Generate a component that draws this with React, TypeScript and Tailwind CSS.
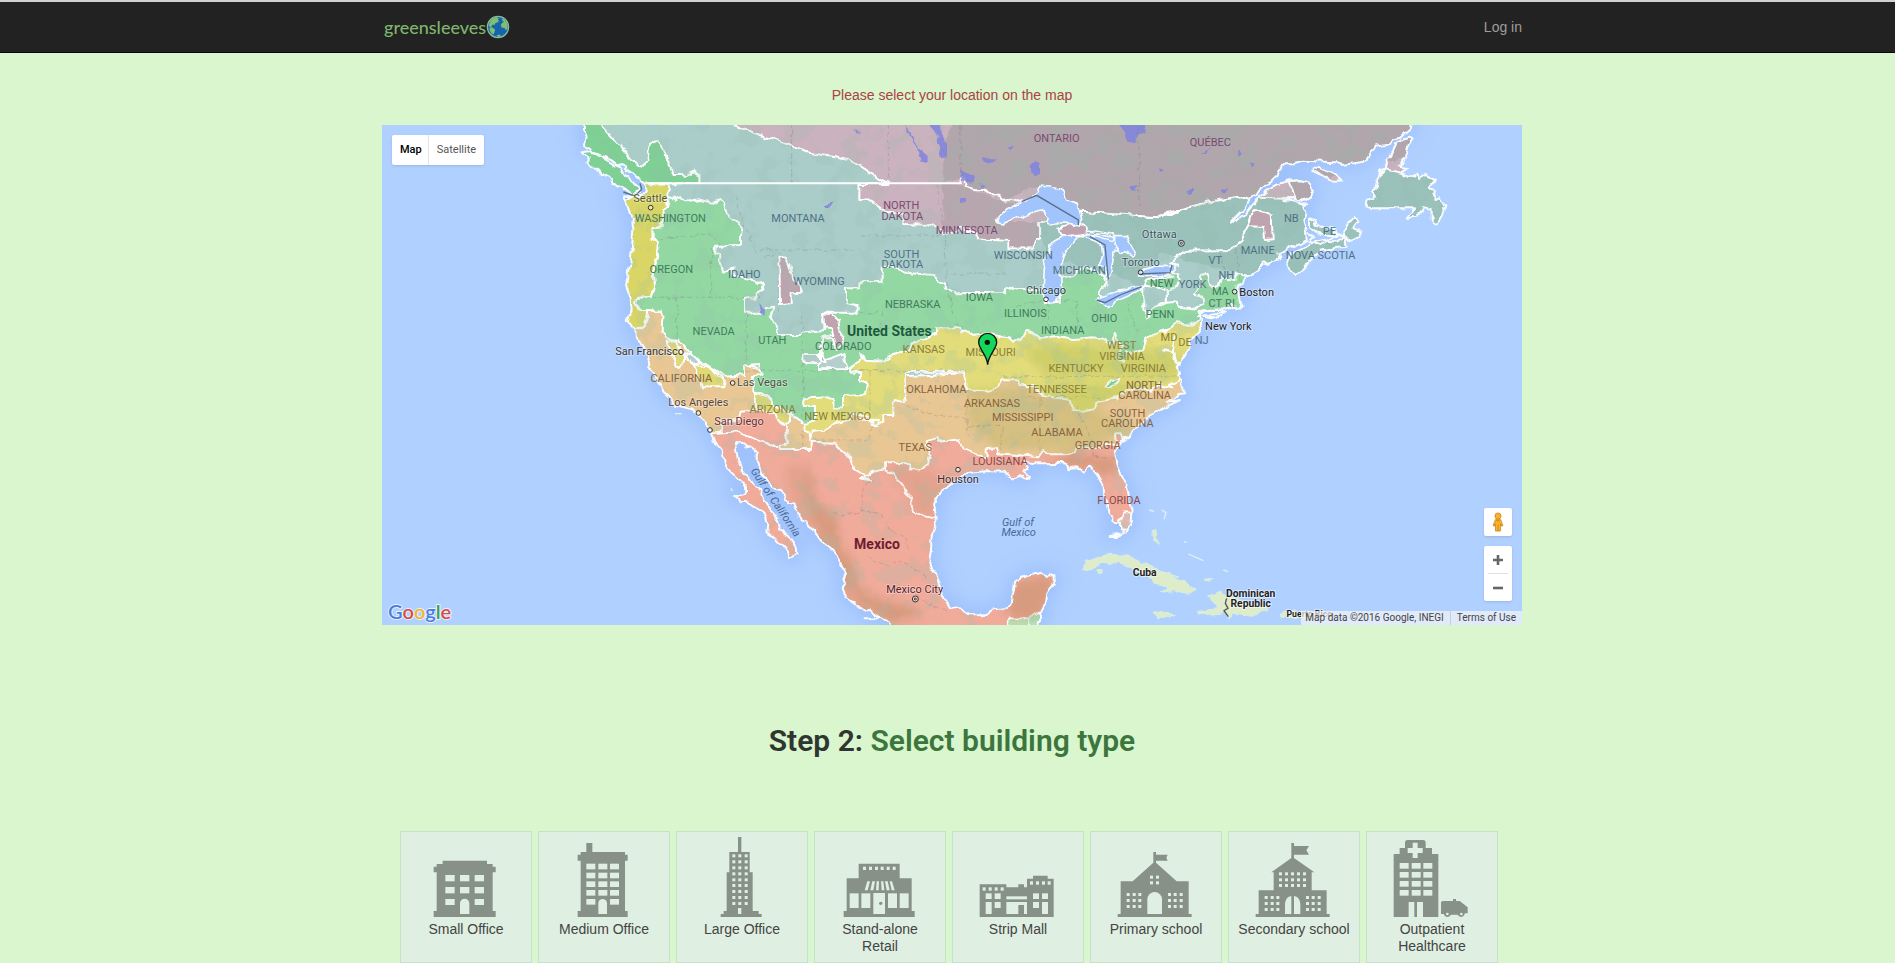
import type { ReactNode } from "react";

type Sheet = "nw" | "nc" | "ne" | "sw" | "s" | "se";
type Piece = [Sheet, string];

// The chart is drawn on six sheets; each sheet has its own origin.
const origins: Record<Sheet, [number, number]> = {
  nw: [534, -15],
  nc: [1434, -15],
  ne: [2334, -15],
  sw: [534, 735],
  s: [1434, 735],
  se: [2334, 735],
};

function pts(...pieces: Piece[]): string {
  return pieces
    .map(([sheet, list]) => {
      const [ox, oy] = origins[sheet];
      return list
        .trim()
        .split(/\s+/)
        .map((p) => {
          const [x, y] = p.split(",").map(Number);
          return `${x + ox},${y + oy}`;
        })
        .join(" ");
    })
    .join(" ");
}

const mainland = pts(
  ["nw", "72,-20 72,30 80,50 75,75 88,85 95,98 130,108 150,118 175,135 188,132 195,150 220,160 238,172 252,190 262,205 258,222 240,226 225,232 192,226 198,245 205,260 210,285 217,300 220,330 217,370 212,420 205,470 200,500 207,520 212,535 215,570 203,605 225,625 228,655 245,672 262,700 268,735 290,768"],
  ["sw", "290,28 305,60 325,78 345,105 385,115 415,130 430,150 450,178 460,200 470,225 487,245 495,285 520,310 545,335 555,350 555,368 540,378 520,376 545,400 560,398 580,410 610,425 622,440 625,460 622,490 640,500 660,520 680,540 688,562 700,560 712,550 710,530 698,512 685,510 670,490 660,475 655,455 640,430 625,415 610,390 600,360 580,340 570,325 545,300 535,270 530,250 525,218 545,222 560,235 575,232 590,245 590,265 600,290 610,320 620,330 635,355 660,360 675,375 685,395 700,400 715,425 722,448 738,455 745,470 760,480 765,492 800,525 825,550 840,575 848,600 858,610 850,628 855,640 845,655 855,680 880,698 905,715 940,728 960,740"],
  ["s", "20,745 60,742 85,755 100,790 530,790 540,760 540,730 555,700 560,670 570,650 585,640 583,615 565,617 545,608 500,618 465,635 460,670 455,700 435,715 400,718 375,733 325,733 300,715 270,708 250,680 235,650 225,610 215,590 208,570 213,540 215,500 222,470 230,450 222,400 228,385 240,370 270,345 300,320 330,308 380,303 430,305 445,320 460,325 475,318 490,320 500,330 510,320 490,303 505,290 495,275 530,280 560,280 600,278 630,295 650,292 665,302 690,290 715,320 727,345 730,380 740,400 745,425 760,440 760,455 780,458 780,478 790,480 785,490 755,495 765,500 795,488 812,460 815,410 800,350 785,320 775,290 765,250 775,230 790,210 820,180 850,160 870,135 890,128 915,112 960,90"],
  ["se", "20,95 40,85 55,72 72,70 70,50 55,20 58,5"],
  ["ne", "60,765 50,740 75,710 85,690 88,665 105,650 120,630 125,600 110,590 140,570 180,568 215,558 235,565 245,555 240,548 235,520 232,505 240,490 260,470 300,445 312,430 330,435 340,420 358,415 355,400 370,392 400,378 420,372 440,360 438,335 430,300 437,280 430,262 445,250 425,255 405,245 370,240 400,235 425,245 450,230 460,205 440,185 420,180 390,182 360,190 330,205 300,225 285,250 270,265 250,290 215,305 235,285 255,265 270,235 290,225 305,200 330,188 350,170 360,150 375,130 400,130 430,122 490,125 530,127 545,135 580,130 610,125 630,98 650,80 690,72 700,55 720,50 750,25 755,-20"],
);

const islands = [
  pts(["nw", "65,98 90,92 100,105 130,108 150,130 178,142 190,165 220,185 240,218 225,225 205,215 185,203 160,190 150,175 128,165 115,150 98,148 85,130 90,115"]),
  pts(["ne", "620,262 622,240 645,230 635,215 650,205 655,180 665,150 685,145 682,120 700,95 710,65 745,50 758,58 745,75 735,110 718,140 745,145 725,158 745,168 765,160 775,178 795,165 825,180 805,205 825,210 820,240 840,235 855,260 845,290 832,312 815,300 815,270 790,265 770,290 740,295 768,265 720,265 640,265"]),
  pts(["ne", "385,425 400,400 430,385 460,368 490,360 530,365 555,350 560,380 520,385 480,392 455,420 430,450 408,462 390,450"]),
  pts(["ne", "550,345 565,310 585,290 592,305 580,325 605,335 600,350 575,362 558,358"]),
  pts(["ne", "450,295 465,300 470,318 520,325 530,345 480,345 450,320"]),
  pts(["ne", "455,142 480,145 530,165 545,185 520,185 485,165 455,152"]),
  pts(["ne", "128,588 165,582 197,572 185,585 150,595"]),
];

const red = pts(["sw", "300,200 400,188 540,60 800,90"], ["s", "0,150 900,150 1000,300 1000,800 -800,800"]);
const orange = pts(
  ["nw", "180,628 248,628 262,600 265,572 308,572 310,640 450,690"],
  ["sw", "560,-20 700,40 850,60"],
  ["s", "100,20 500,0 800,20 960,30"],
  ["se", "120,20 120,130"],
  ["s", "820,260 820,180 790,205 785,190 765,190 768,225 735,222 720,235 650,232 645,250 560,250 550,240 535,262 500,258 415,250 410,235 380,238 380,260 355,255 310,235 300,208 240,215 235,203 205,212 200,225 215,240 205,265 200,285 180,302 150,295 145,280 75,280 75,298 40,305 0,325"],
  ["sw", "930,330 885,300 870,265 840,240 820,218 755,215 755,237 655,237 655,225 680,220 680,165 640,125 580,120 545,125 540,150 485,152 485,185 430,188 200,150"],
);
const yellow = pts(
  ["sw", "730,180 745,185 750,210 755,185 795,182 820,160 870,150 870,130 930,140 932,168 950,168 960,150"],
  ["s", "0,148 25,150 40,155 40,170 70,155 70,135 100,135 100,90 135,95 135,5 315,5 320,58 400,62 412,50 425,28 470,28 480,45 520,45 545,75 630,90 635,120 680,122 700,118 715,95 770,85 800,62 840,50 870,65 900,45 940,55"],
  ["se", "30,45 60,30 120,20"],
  ["ne", "150,590 120,560"],
  ["nc", "900,590 500,600 20,600"],
  ["nw", "905,690 860,765"],
  ["sw", "820,60 730,60"],
);
const yellowCoast = pts(["nw", "262,192 328,195 325,225 315,245 318,262 308,280 305,322 278,325 278,360 290,365 295,385 293,410 280,450 285,490 275,530 235,533 228,555 245,570 265,570 255,600 250,625 150,640 150,228 240,228"]);
const yellowSpots = [
  pts(["nw", "320,665 350,660 350,680 365,690 380,712 352,742 330,700"]),
  pts(["nw", "400,735 440,738 495,780"], ["sw", "490,52 425,52 420,30"]),
  pts(["sw", "585,68 620,78 640,100 690,130 690,162 670,165 640,130 585,120"]),
];
const greenCoast = pts(["nw", "0,-20 118,-10 130,25 200,100 232,135 250,137 262,118 268,80 280,62 292,60 305,75 320,115 340,165 380,165 400,155 418,165 418,190 262,190 200,240 0,240"]);
const green = pts(
  ["nw", "328,225 345,240 365,235 390,245 420,240 460,248 480,240 492,250 500,285 530,305 545,320 540,345 540,378 465,380 462,398 480,405 482,430 490,455 520,440 525,470 575,480 590,492 608,488 610,512 590,520 590,532 555,535 555,578 610,578 620,565 640,560 632,590 650,620 655,645 720,645 725,638 790,630 790,578 893,578 893,555 858,550 858,505 898,505 898,487"],
  ["nc", "65,485 65,440 100,440 150,460 225,465 230,482 255,490 258,508 285,520 435,518 440,502 480,510 550,510 555,550 600,545 600,475 640,465 670,440 710,450 730,470 740,490 720,520 740,550 850,500 850,572 865,592 885,560 920,550 920,510 880,500 850,497 860,480 940,470"],
  ["ne", "0,460 55,460 60,490 22,515 20,548 50,545 55,560 95,565 130,552 128,530 105,525 120,500 120,470 140,462 150,498 180,495 185,475 230,480 228,460 300,480 300,575 115,572 130,590 100,615 50,610 15,635 0,632"],
  ["nc", "940,620 890,640 860,655 850,690 800,700 790,727 770,710 790,680 765,640 758,675 730,660 700,655 640,660 590,650 545,660 520,640 495,635 485,655 460,668 445,655 425,650 380,640 340,645 325,635 300,635 300,625 225,625 225,640 200,655 155,670 150,690 85,705 70,725 20,722 0,700"],
  ["nw", "905,708 900,722 865,745 870,755"],
  ["sw", "900,5 900,35 920,40 915,75 852,78 852,115 820,115 820,82 735,85 730,105 765,105 765,155 730,158 690,130 640,100 620,78 580,68 582,20 605,12"],
  ["nw", "600,732 555,735 555,765 495,770 430,728 380,690 355,660 320,655 305,635 308,572 262,570 245,570 225,550 230,535 275,530 285,490 280,450 295,410 290,365 278,360 278,325 305,322 308,280 318,262"],
);
const mauve = pts(
  ["nw", "490,-20 520,15 600,45 690,75 740,97 870,120 960,178"],
  ["nc", "85,188 85,192 -2,192 -2,240 20,235 60,260 75,275 130,285 130,312 215,315 245,330 250,345 285,340 300,325 345,335 355,358 445,362 445,385 520,385 525,362 540,355 540,310 665,275 890,292 960,272"],
  ["ne", "0,285 130,250 245,228 265,235 300,230 500,240 620,190 680,148 720,158 760,170 770,100 780,-20"],
);
const mauveSpots = [
  pts(["nw", "658,408 680,410 690,430 700,480 718,492 725,518 692,520 692,550 660,552"]),
  pts(["nw", "790,580 815,582 835,600 838,625 850,670 830,690 822,655 785,655 785,705 800,728 780,722 780,700 785,650 820,645 815,625 792,622"]),
  pts(["ne", "262,315 275,280 285,270 335,285 338,358 315,360 312,318"]),
  pts(["nc", "595,325 650,312 680,325 680,345 620,350 600,345"]),
];
const gaspe = pts(["ne", "385,183 440,180 462,205 450,230 410,242"]);
const tealSpots = [
  pts(["nw", "730,705 780,705 785,725 850,700 858,748 780,748 780,730 730,728"]),
  pts(["nw", "378,700 400,705 422,730 395,735"]),
];
const slate = pts(["nc", "250,188 303,172 318,200 350,208 390,222 430,240 540,195 660,275 890,292 960,272"], ["ne", "0,285 245,228 265,235 350,170 500,180 780,100 780,-20"], ["nc", "290,-20 250,80"]);
const slateSouth = pts(["nc", "247,193 298,193 320,207 350,215 390,228 430,247 480,250 430,300 537,312 537,352 520,362 517,382 448,382 448,359 358,355 348,331 300,322 285,337 252,340"]);

const lakes = [
  pts(["nc", "408,305 425,285 440,270 480,250 510,235 535,215 540,195 570,198 600,205 612,220 620,240 655,250 660,280 665,300 655,318 625,312 610,305 575,318 560,312 565,292 545,270 520,275 500,292 470,285 450,300 430,310"]),
  pts(["nc", "640,345 605,350 580,365 560,400 553,450 550,500 555,535 570,548 590,545 605,510 600,450 615,400 635,370 655,350"]),
  pts(["nc", "665,345 690,340 740,345 762,355 770,385 760,410 752,460 742,480 735,470 738,440 715,440 728,410 725,375 690,355"]),
  pts(["nc", "765,350 800,350 812,375 825,400 818,412 795,398 780,400 762,372"]),
  pts(["nc", "708,540 735,530 760,515 800,505 850,495 845,510 800,530 765,545 740,560"]),
  pts(["nc", "835,465 850,448 890,438 930,440 945,430 945,452 900,470"]),
];
const ponds = [
  pts(["nc", "770,10 860,10 855,35 835,45 828,70 805,65 795,40"]),
  pts(["nc", "512,132 525,122 540,130 540,165 525,168 514,155"]),
  pts(["nc", "130,10 145,25 160,60 175,85 200,105 200,128 185,125 178,98 160,70"]),
  pts(["nc", "205,10 240,15 242,40 258,70 258,112 240,115 246,85 232,50"]),
  pts(["nc", "303,150 320,160 340,170 345,185 320,190 305,178"]),
  pts(["nc", "300,235 320,232 310,245 300,245"]),
  pts(["nc", "370,110 390,118 410,118 400,128 375,125"]),
  pts(["nc", "440,80 462,74 450,88"]),
  pts(["nc", "360,190 378,196 366,202"]),
  pts(["nc", "808,200 835,195 830,210 815,212"]),
  pts(["nc", "900,145 915,150 905,156"]),
  pts(["ne", "80,210 105,205 100,218 85,222"]),
  pts(["ne", "182,205 205,210 195,220 185,215"]),
  pts(["ne", "235,90 245,100 235,108"]),
  pts(["ne", "120,105 150,85 135,105"]),
  pts(["ne", "270,125 285,135 272,142"]),
  pts(["nw", "595,550 605,560 618,575 615,590 600,575"]),
  pts(["nw", "790,258 812,250 822,242 812,258"]),
  pts(["nw", "880,35 905,35 890,42"]),
];
const borders = [
  pts(["nw", "695,15 695,190"]),
  pts(["nc", "85,15 85,188"]),
  pts(["nc", "303,15 303,172"]),
  pts(["nc", "835,15 840,250"]),
  pts(["nw", "300,357 350,350 455,342 480,378"]),
  pts(["nw", "455,380 455,532"]),
  pts(["nw", "275,532 600,532"]),
  pts(["nw", "352,532 352,660"]),
  pts(["nw", "560,578 558,740"]),
  pts(["nw", "530,230 545,300 600,415 655,400 655,578"]),
  pts(["nw", "600,390 898,390"]),
  pts(["nw", "727,578 727,752"]),
  pts(["nw", "560,752 960,752"]),
  pts(["nc", "0,345 255,345"]),
  pts(["nc", "232,195 240,270 257,350 255,462 285,600 300,635"]),
  pts(["nc", "0,578 65,578 65,625 280,625"]),
  pts(["nc", "255,462 440,462"]),
  pts(["nc", "440,590 470,560 540,540 650,545 655,640"]),
  pts(["nc", "565,545 565,640"]),
  pts(["nc", "800,545 830,635"]),
  pts(["nc", "0,752 320,752"]),
  pts(["sw", "930,5 930,210 750,210"]),
  pts(["sw", "728,5 728,237"]),
  pts(["s", "135,5 135,105 200,130 320,145 330,210"]),
  pts(["s", "320,60 325,165 420,170"]),
  pts(["s", "540,80 540,250"]),
  pts(["s", "430,170 420,240"]),
  pts(["s", "650,110 690,200 700,262 770,265"]),
  pts(["s", "500,80 720,80"]),
  pts(["nc", "430,770 960,768"]),
  pts(["sw", "820,435 900,430 910,350 935,330"]),
  pts(["s", "0,420 60,430 90,480 130,500 150,540"]),
  pts(["s", "20,560 80,590 120,570 200,620"]),
  pts(["s", "100,680 160,660 200,700 260,720"]),
  pts(["ne", "180,395 190,430 200,480"]),
  pts(["ne", "225,385 235,440 240,480"]),
];

type Tone = "teal" | "green" | "mauve" | "yellow" | "orange" | "red";
const tones: Record<Tone, string> = {
  teal: "fill-[#4f7186]",
  green: "fill-[#3f7d5b]",
  mauve: "fill-[#7c4a73]",
  yellow: "fill-[#8a7f38]",
  orange: "fill-[#8a6440]",
  red: "fill-[#90484a]",
};

const regions: [Sheet, number, number, string, Tone][] = [
  ["nc", 590, 67, "ONTARIO", "mauve"],
  ["ne", 151, 79, "QUÉBEC", "mauve"],
  ["nw", 331, 305, "WASHINGTON", "green"],
  ["nw", 714, 307, "MONTANA", "teal"],
  ["nw", 334, 460, "OREGON", "green"],
  ["nw", 553, 473, "IDAHO", "teal"],
  ["nw", 777, 496, "WYOMING", "teal"],
  ["nw", 461, 644, "NEVADA", "green"],
  ["nw", 637, 673, "UTAH", "green"],
  ["nw", 850, 691, "COLORADO", "green"],
  ["nc", 124, 268, "NORTH", "mauve"],
  ["nc", 127, 299, "DAKOTA", "mauve"],
  ["nc", 125, 413, "SOUTH", "teal"],
  ["nc", 127, 443, "DAKOTA", "teal"],
  ["nc", 320, 343, "MINNESOTA", "mauve"],
  ["nc", 490, 416, "WISCONSIN", "teal"],
  ["nc", 658, 461, "MICHIGAN", "teal"],
  ["nc", 158, 565, "NEBRASKA", "green"],
  ["nc", 358, 544, "IOWA", "green"],
  ["nc", 496, 590, "ILLINOIS", "green"],
  ["nc", 733, 607, "OHIO", "green"],
  ["nc", 608, 641, "INDIANA", "green"],
  ["nc", 191, 700, "KANSAS", "yellow"],
  ["nc", 392, 708, "MISSOURI", "yellow"],
  ["nc", 785, 688, "WEST", "yellow"],
  ["nc", 786, 719, "VIRGINIA", "yellow"],
  ["nc", 648, 757, "KENTUCKY", "yellow"],
  ["nc", 850, 757, "VIRGINIA", "yellow"],
  ["nc", 905, 502, "NEW", "green"],
  ["ne", 98, 503, "YORK", "teal"],
  ["ne", 0, 594, "PENN", "green"],
  ["ne", 166, 431, "VT", "teal"],
  ["ne", 199, 477, "NH", "teal"],
  ["ne", 293, 403, "MAINE", "teal"],
  ["ne", 394, 306, "NB", "teal"],
  ["ne", 508, 344, "PE", "teal"],
  ["ne", 482, 416, "NOVA SCOTIA", "teal"],
  ["ne", 181, 526, "MA", "green"],
  ["ne", 166, 562, "CT", "green"],
  ["ne", 210, 562, "RI", "green"],
  ["ne", 27, 663, "MD", "yellow"],
  ["ne", 75, 678, "DE", "yellow"],
  ["ne", 125, 671, "NJ", "teal"],
  ["sw", 364, 37, "CALIFORNIA", "orange"],
  ["sw", 638, 128, "ARIZONA", "yellow"],
  ["sw", 833, 151, "NEW MEXICO", "yellow"],
  ["s", 229, 70, "OKLAHOMA", "orange"],
  ["s", 396, 112, "ARKANSAS", "orange"],
  ["s", 488, 153, "MISSISSIPPI", "orange"],
  ["s", 590, 70, "TENNESSEE", "yellow"],
  ["s", 591, 198, "ALABAMA", "orange"],
  ["s", 713, 237, "GEORGIA", "orange"],
  ["s", 852, 57, "NORTH", "orange"],
  ["s", 854, 87, "CAROLINA", "orange"],
  ["s", 803, 142, "SOUTH", "orange"],
  ["s", 802, 172, "CAROLINA", "orange"],
  ["s", 166, 242, "TEXAS", "orange"],
  ["s", 420, 286, "LOUISIANA", "red"],
  ["s", 777, 403, "FLORIDA", "red"],
];

const cities: [Sheet, number, number, string, string][] = [
  ["nw", 271, 246, "Seattle", "fill-[#5c5a2c]"],
  ["nw", 269, 704, "San Francisco", "fill-[#3a3330]"],
  ["sw", 607, 49, "Las Vegas", "fill-[#46533f]"],
  ["sw", 415, 109, "Los Angeles", "fill-[#5a4636]"],
  ["sw", 537, 164, "San Diego", "fill-[#6a2f31]"],
  ["nc", 558, 521, "Chicago", "fill-[#2c4446]"],
  ["nc", 842, 437, "Toronto", "fill-[#3c5668]"],
  ["nc", 898, 353, "Ottawa", "fill-[#3c5668]"],
  ["ne", 290, 527, "Boston", "fill-[#222222]"],
  ["ne", 205, 631, "New York", "fill-[#222222]"],
  ["s", 294, 340, "Houston", "fill-[#3a2c30]"],
  ["s", 164, 670, "Mexico City", "fill-[#5f2028]"],
];

const dots: [Sheet, number, number][] = [
  ["nw", 272, 263],
  ["sw", 518, 39],
  ["sw", 415, 129],
  ["sw", 450, 180],
  ["nc", 558, 538],
  ["nc", 842, 457],
  ["ne", 224, 515],
  ["s", 294, 299],
];

function at(sheet: Sheet, x: number, y: number): [number, number] {
  return [x + origins[sheet][0], y + origins[sheet][1]];
}

function MapChart() {
  return (
    <svg
      viewBox="0 0 3420 1500"
      preserveAspectRatio="xMidYMid slice"
      className="block h-full w-full bg-[#b0d0ff] font-[Roboto,sans-serif]"
      role="img"
      aria-label="Climate zones of North America"
    >
      <defs>
        <clipPath id="land">
          <polygon points={mainland} />
          {islands.map((p, i) => (
            <polygon key={i} points={p} />
          ))}
        </clipPath>
        <filter id="soft" x="-10%" y="-10%" width="120%" height="120%">
          <feGaussianBlur stdDeviation="28" />
        </filter>
        <filter id="haze" x="-10%" y="-10%" width="120%" height="120%">
          <feGaussianBlur stdDeviation="12" />
        </filter>
        <filter id="rough" filterUnits="userSpaceOnUse" x="-30" y="-30" width="3480" height="1560">
          <feTurbulence type="fractalNoise" baseFrequency="0.035" numOctaves="2" seed="3" result="n" />
          <feDisplacementMap in="SourceGraphic" in2="n" scale="20" xChannelSelector="R" yChannelSelector="G" />
        </filter>
        <filter id="relief" x="0" y="0" width="100%" height="100%">
          <feTurbulence type="fractalNoise" baseFrequency="0.016" numOctaves="5" seed="8" />
          <feColorMatrix values="0 0 0 0 0.3  0 0 0 0 0.5  0 0 0 0 0.4  9 0 0 0 -4.7" />
        </filter>
      </defs>

      <g filter="url(#soft)" className="fill-[#98bcfb] stroke-[#98bcfb]" strokeWidth="40" opacity="0.75">
        <polygon points={mainland} />
      </g>

      <g filter="url(#rough)">
        <g clipPath="url(#land)">
          <rect width="3420" height="1500" className="fill-[#abcdca]" />
          <polygon points={pts(["nc", "540,300 665,275 960,272"], ["ne", "0,285 245,228 400,100 900,100 900,500 300,480 0,400"], ["nc", "850,500 700,440 560,420"])} className="fill-[#9ac1ba]" />
          <g className="stroke-white" strokeWidth="6" strokeLinejoin="round">
            <polygon points={mauve} className="fill-[#cab2be]" />
            <polygon points={red} className="fill-[#f0ab9b]" />
            <polygon points={orange} className="fill-[#e9c795]" />
            <polygon points={yellow} className="fill-[#e2dc7a]" />
            <polygon points={yellowCoast} className="fill-[#dad666]" />
            <polygon points={greenCoast} className="fill-[#7fd095]" />
            <polygon points={green} className="fill-[#93d8a3]" />
            {yellowSpots.map((p, i) => (
              <polygon key={i} points={p} className="fill-[#dfd976]" />
            ))}
            {tealSpots.map((p, i) => (
              <polygon key={i} points={p} className="fill-[#b4cfcc]" />
            ))}
          </g>
          <polygon points={slate} className="fill-[#b0a6ab]" />
          <polygon points={slateSouth} className="fill-[#b8a6af]" />
          <g className="fill-[#bfa3af] stroke-white" strokeWidth="6" strokeLinejoin="round">
            {mauveSpots.map((p, i) => (
              <polygon key={i} points={p} />
            ))}
            <polygon points={gaspe} className="fill-[#b0a6ab]" />
            <polyline points={pts(["nc", "540,310 665,275 890,292 960,272"], ["ne", "0,285 130,250 245,228 268,237"])} fill="none" />
            <polyline points={pts(["nc", "300,190 303,172 312,178 318,200 350,208 372,206 390,222 415,224 430,240 450,236 485,243"])} fill="none" />
            <polyline points={pts(["s", "75,298 100,310 112,330 130,350 135,370 150,385 160,425 190,438 230,446"])} fill="none" />
            <polyline points={pts(["sw", "455,190 530,184 650,232"])} fill="none" />
            <polyline points={pts(["nc", "960,435"], ["ne", "30,430 75,392 210,390 245,362 262,315"])} fill="none" />
            <polygon points={pts(["s", "735,52 750,35 775,25 772,38 745,55"])} className="fill-[#7bd3a0]" />
          </g>
          <g className="fill-[#dcd4b8] stroke-white" strokeWidth="5">
            <polygon points={pts(["s", "443,745 505,745 505,790 443,790"])} className="fill-[#bfdcb4]" />
            <polygon points={pts(["s", "505,745 545,725 560,700 560,790 505,790"])} className="fill-[#b8e4bb]" />
            <polygon points={pts(["s", "778,455 790,430 815,430 812,478 780,478"])} className="fill-[#dfb9b0]" />
          </g>
          <g className="fill-[#a0783f]" opacity="0.3" filter="url(#haze)">
            <polygon points={pts(["sw", "680,290 710,280 740,330 780,400 830,440 820,520 870,570 890,640 960,700"], ["s", "60,740 0,745 -60,720 -80,640 -130,520 -180,430 -220,340"])} opacity="0.5" />
            <polygon points={pts(["sw", "730,270 750,300 760,370 790,420 830,440 840,520 880,580 900,680 860,650 820,540 770,470 740,380"])} />
            <polygon points={pts(["s", "0,650 60,690 120,700 200,730 100,760 0,700"])} />
            <polygon points={pts(["s", "440,745 460,640 583,612 560,700 540,745"])} />
            <polygon points={pts(["s", "560,280 640,250 760,265 780,300 730,320 690,290 650,300"])} />
            <polygon points={pts(["s", "75,285 200,300 290,330 230,380 228,440 160,425 130,350"])} opacity="0.5" />
          </g>
          <g className="fill-[#86a030]" opacity="0.2" filter="url(#haze)">
            <polygon points={pts(["s", "320,60 480,45 640,100 720,120 820,180 640,245 400,235 330,170"])} />
            <polygon points={pts(["nc", "480,680 640,675 960,700 960,768 560,768"])} />
            <polygon points={pts(["s", "540,40 900,40 680,120"])} />
          </g>
          <rect width="3420" height="1500" filter="url(#relief)" opacity="0.2" />
          <g className="fill-[#8183e0]" opacity="0.85">
            {ponds.map((p, i) => (
              <polygon key={i} points={p} />
            ))}
          </g>
          <g fill="none" className="stroke-[#556]" strokeWidth="2" strokeDasharray="14 7" opacity="0.3">
            {borders.map((p, i) => (
              <polyline key={i} points={p} />
            ))}
          </g>
        </g>

        <g fill="none" className="stroke-[#f7fbff]" strokeWidth="6" strokeLinejoin="round">
          <polygon points={mainland} />
          {islands.map((p, i) => (
            <polygon key={i} points={p} />
          ))}
          <g className="fill-[#a0c4fb]" strokeWidth="5">
            {lakes.map((p, i) => (
              <polygon key={i} points={p} />
            ))}
          </g>
          <polyline points={pts(["nc", "680,330 720,335 765,345 755,362 700,345"])} strokeWidth="4" />
          <polyline points={pts(["ne", "45,650 38,690 55,735 45,700 10,690"])} strokeWidth="7" />
          <polyline points={pts(["ne", "440,340 460,350 445,365 485,375 530,345 560,355"])} />
          <polyline points={pts(["ne", "115,600 130,570 200,572"])} strokeWidth="4" />
        </g>

        <g className="fill-[#deecca] stroke-[#d6efdf]" strokeWidth="3" strokeLinejoin="round">
          <polygon points={pts(["s", "663,602 680,575 720,560 750,553 800,556 850,580 900,602 960,622"], ["se", "30,612 60,630 85,640 110,662 80,670 40,662"], ["s", "900,667 925,655 915,645 880,638 860,612 830,600 780,578 730,578 700,590"])} />
          <polygon points={pts(["se", "145,678 180,663 240,690 300,708 325,720 280,736 215,730 208,748 190,728 120,736 115,724 175,716"])} />
          <polygon points={pts(["s", "878,730 905,725 945,735 930,745 890,745"])} />
          <polygon points={pts(["se", "0,725 40,738 20,746 0,744"])} />
          <polygon points={pts(["se", "358,730 400,722 470,735 460,745 360,742"])} />
          <polygon points={pts(["se", "135,630 155,623 150,633"])} />
          <circle cx="2154" cy="1339" r="7" />
          <polygon points={pts(["s", "876,485 888,482 890,500 902,520 885,508"])} />
        </g>
      </g>

      <polyline points={pts(["nw", "262,190 960,190"], ["nc", "85,190 300,190"])} fill="none" className="stroke-white" strokeWidth="6" />

      <g fill="none" className="stroke-[#5b6f8e]" strokeWidth="4">
        <polyline points={pts(["nc", "485,245 530,226 655,300 655,315"])} />
        <polyline points={pts(["nc", "690,350 735,375 745,478"])} />
        <polyline points={pts(["nc", "710,540 735,548 780,525 845,500"])} />
        <polyline points={pts(["nc", "840,462 930,458 936,435"])} />
        <polyline points={pts(["nw", "190,216 225,228 245,208 240,190"])} />
      </g>
      <g fill="none" className="stroke-[#dff0f4]" strokeWidth="4">
        <polyline points={pts(["s", "868,420 882,424"])} />
        <polyline points={pts(["s", "905,420 918,428 912,448"])} />
        <polyline points={pts(["se", "72,515 80,517"])} />
        <polyline points={pts(["se", "85,552 130,572"])} />
        <polyline points={pts(["se", "190,600 205,605"])} />
        <polyline points={pts(["sw", "345,131 365,131"])} />
        <polyline points={pts(["sw", "513,355 517,364"])} />
      </g>
      <polyline points={pts(["se", "200,685 196,700 204,715 192,722 205,740"])} fill="none" className="stroke-[#555]" strokeWidth="4" />

      <g fontSize="33" textAnchor="middle">
        {regions.map(([sheet, x, y, name, tone], i) => {
          const [cx, cy] = at(sheet, x, y);
          return (
            <text key={i} x={cx} y={cy} className={tones[tone]}>
              {name}
            </text>
          );
        })}
        {cities.map(([sheet, x, y, name, fill]) => {
          const [cx, cy] = at(sheet, x, y);
          return (
            <text key={name} x={cx} y={cy} className={`${fill} stroke-white/40`} strokeWidth="5" paintOrder="stroke">
              {name}
            </text>
          );
        })}
        <g className="fill-[#4a6a96] italic">
          <text x="1908" y="1202">Gulf of</text>
          <text x="1910" y="1232">Mexico</text>
          <text x="0" y="0" transform="translate(1172 1138) rotate(56)">Gulf of California</text>
        </g>
        <g className="fill-[#1f1f1f] stroke-white/60 font-bold" strokeWidth="5" paintOrder="stroke" fontSize="31">
          <text x="2288" y="1354">Cuba</text>
          <text x="2606" y="1415">Dominican</text>
          <text x="2606" y="1445">Republic</text>
          <text x="2782" y="1476" fontSize="26">Puerto Rico</text>
        </g>
        <g className="font-bold" fontSize="42">
          <text x="1522" y="632" className="fill-[#1e5a3d]">United States</text>
          <text x="1485" y="1272" className="fill-[#6e1c2e]">Mexico</text>
        </g>
      </g>

      <g className="fill-white/50 stroke-[#333]" strokeWidth="3">
        {dots.map(([sheet, x, y], i) => {
          const [cx, cy] = at(sheet, x, y);
          return <circle key={i} cx={cx} cy={cy} r="7" />;
        })}
        <circle cx="2398" cy="355" r="9" />
        <circle cx="2398" cy="355" r="3" />
        <circle cx="1600" cy="1422" r="9" />
        <circle cx="1600" cy="1422" r="3" />
      </g>

      <path
        d="M1817 719 C1815 690 1790 672 1790 652 A27 27 0 1 1 1844 652 C1844 672 1819 690 1817 719 Z"
        className="fill-[#12d95a] stroke-[#111]"
        strokeWidth="4"
      />
      <circle cx="1816" cy="652" r="8" className="fill-[#111]" />
    </svg>
  );
}

function Globe() {
  return (
    <svg viewBox="0 0 24 24" className="size-6" aria-hidden="true">
      <circle cx="12" cy="12" r="10.6" className="fill-[#1564ae] stroke-[#86bd9c]" strokeWidth="1.3" />
      <path d="M3.5 8 C5 4 8 2.4 11 2.3 L13 3.4 L11.5 4.5 L13.2 5.6 L11.4 7.4 L9.5 8 L8.5 10 L6.5 9.6 L5.5 11.4 L4 12.4 L3 10 Z" className="fill-[#83bd70]" />
      <path d="M3.6 12.6 L6.5 12.4 L9 14.4 L8.6 17 L7.4 19.4 L5.6 18.6 L4 16 Z" className="fill-[#83bd70]" />
      <path d="M15.6 3.2 C18.5 4.2 20.6 6.4 21.3 9 L21.6 13 L20 15.6 L18.6 13 L15.6 12.4 L14.8 10 L16.6 7.6 L18 7 L16.4 5.4 Z" className="fill-[#83bd70]" />
      <path d="M10.4 20.4 L13.6 19.6 L15 21.2 L12.4 22 Z" className="fill-[#83bd70]" />
    </svg>
  );
}

function Grid({ xs, ys, w, h }: { xs: number[]; ys: number[]; w: number; h: number }) {
  return (
    <g className="fill-[#dfefe1]">
      {ys.map((y) => xs.map((x) => <rect key={`${x}-${y}`} x={x} y={y} width={w} height={h} />))}
    </g>
  );
}

const hole = "fill-[#dfefe1]";

const buildings: { name: string; view: string; art: ReactNode }[] = [
  {
    name: "Small Office",
    view: "34 51 390 240",
    art: (
      <>
        <path d="M159 122H292V132H309V140H318V157H309V273H318V291H132V273H141V157H132V140H141V132H159Z" />
        <Grid xs={[167, 211, 255]} ys={[165, 201]} w={28} h={19} />
        <Grid xs={[167, 255]} ys={[237]} w={28} h={18} />
        <path d="M211 282V250A14 14 0 0 1 239 250V282Z" className={hole} />
      </>
    ),
  },
  {
    name: "Medium Office",
    view: "448 51 390 240",
    art: (
      <>
        <path d="M590 69H608V96H706V104H714V122H706V273H714V291H564V273H573V122H564V104H573V96H590Z" />
        <Grid xs={[590, 626, 661]} ys={[131, 158, 184, 210]} w={27} h={17} />
        <Grid xs={[590, 661]} ys={[237]} w={27} h={17} />
        <path d="M626 282V250A13 13 0 0 1 652 250V282Z" className={hole} />
      </>
    ),
  },
  {
    name: "Large Office",
    view: "862 51 390 240",
    art: (
      <>
        <path d="M1045 51H1055V96H1080V157H1089V273H1107V282H1116V291H993V282H1002V273H1011V157H1019V96H1045Z" />
        <Grid xs={[1028, 1046, 1065]} ys={[103, 121, 139, 157, 175, 192, 210, 228, 246]} w={9} h={9} />
        <rect x="1045" y="264" width="10" height="18" className={hole} />
      </>
    ),
  },
  {
    name: "Stand-alone Retail",
    view: "46 51 390 240",
    art: (
      <>
        <path d="M177 131H300V175H336V273H345V291H132V273H141V175H177Z" />
        <Grid xs={[190, 208, 226, 243, 261, 279]} ys={[140]} w={9} h={10} />
        <path d="M203 184H211L204 211H195ZM218 184H226L221 211H212ZM231 184H238L237 211H229ZM244 184H251L254 211H246ZM256 184H264L270 211H261ZM270 184H277L285 211H276Z" className={hole} />
        <Grid xs={[150, 185, 265, 300]} ys={[220]} w={27} h={44} />
        <rect x="221" y="219" width="35" height="63" className={hole} />
        <circle cx="243" cy="250" r="5" />
      </>
    ),
  },
  {
    name: "Strip Mall",
    view: "460 51 390 240",
    art: (
      <>
        <path d="M540 193H620V202H656V193H673V202H682V176H700V167H744V176H762V291H540Z" />
        <Grid xs={[549, 567, 585, 603]} ys={[202]} w={9} h={10} />
        <Grid xs={[691, 709, 727, 744]} ys={[184]} w={9} h={10} />
        <Grid xs={[558, 585, 700, 727]} ys={[220]} w={18} h={17} />
        <Grid xs={[585, 700]} ys={[246]} w={18} h={18} />
        <Grid xs={[558, 727]} ys={[246]} w={18} h={36} />
        <rect x="620" y="229" width="62" height="9" className={hole} />
        <path d="M620 246H682V282H673V255H656V282H620Z" className={hole} />
      </>
    ),
  },
  {
    name: "Primary school",
    view: "874 51 390 240",
    art: (
      <>
        <path d="M1061 96H1069V104H1104L1100 113L1104 122H1069V128L1131 184H1167V282H1176V291H954V282H963V184H999L1061 128Z" />
        <Grid xs={[1051, 1069]} ys={[167, 184]} w={9} h={9} />
        <Grid xs={[981, 999, 1016, 1105, 1122, 1140]} ys={[219, 237, 255]} w={9} h={9} />
        <path d="M1043 282V238A22 22 0 0 1 1087 238V282Z" className={hole} />
      </>
    ),
  },
  {
    name: "Secondary school",
    view: "58 51 390 240",
    art: (
      <>
        <path d="M245 69H253V78H298L290 91L298 104H253V114L314 157H306V211H351V282H360V291H138V282H147V211H192V157H185L245 114Z" />
        <Grid xs={[208, 226, 244, 262, 280]} ys={[157, 175, 192]} w={9} h={9} />
        <Grid xs={[165, 183, 200, 289, 306, 324]} ys={[228, 246, 264]} w={9} h={9} />
        <path d="M226 282V252Q228 230 245 228V282ZM253 282V228Q270 230 272 252V282Z" className={hole} />
      </>
    ),
  },
  {
    name: "Outpatient Healthcare",
    view: "472 51 390 240",
    art: (
      <>
        <path d="M594 60H640Q648 60 648 68V84H667V102H686V291H552V102H570V84H586V68Q586 60 594 60Z" />
        <path d="M609 68H624V84H639V99H624V114H609V99H594V84H609Z" className={hole} />
        <Grid xs={[570, 606, 641]} ys={[129, 156, 183, 210]} w={27} h={17} />
        <path d="M597 246H614V291H597ZM622 246H640V291H622Z" className={hole} />
        <path d="M698 243H730V237H739V243H750L774 262V280H766A12 12 0 0 1 744 284H724A12 12 0 0 1 702 282H694V247Z" />
        <circle cx="713" cy="282" r="8" />
        <circle cx="755" cy="282" r="8" />
        <circle cx="713" cy="282" r="4" className={hole} />
        <circle cx="755" cy="282" r="4" className={hole} />
      </>
    ),
  },
];

function Pegman() {
  return (
    <svg viewBox="0 0 12 22" className="h-5 w-3" aria-hidden="true">
      <path d="M3 8.4 H9 L11.4 15 L10 15.6 L8.8 13 V21 H3.2 V13 L2 15.6 L.6 15 Z" className="fill-[#f9b32a] stroke-[#b9770f]" strokeWidth=".7" />
      <circle cx="6" cy="4.4" r="3.4" className="fill-[#f9b32a] stroke-[#b9770f]" strokeWidth=".7" />
      <path d="M3.4 8.4 L6 11 L8.6 8.4 Z" className="fill-[#e58a12]" />
      <path d="M6 14 V21" className="stroke-[#b9770f]" strokeWidth=".7" />
    </svg>
  );
}

export default function App() {
  return (
    <div className="bg-[#d9f6cf] font-['Liberation_Sans',Arial,sans-serif] text-sm text-[#333]">
      <header className="border-t-2 border-b border-t-[#cfd3d2] border-b-[#080808] bg-[#222] pl-[9px]">
        <nav className="mx-auto flex h-[50px] max-w-[1140px] items-center justify-between">
          <a href="#" className="flex items-center pl-0.5 font-[Lato,sans-serif] text-[18px] leading-6 font-medium text-[#7fb56c]">
            <span>greensleeves</span>
            <Globe />
          </a>
          <a href="#login" className="text-[#9d9d9d]">
            Log in
          </a>
        </nav>
      </header>

      <main className="pl-[9px]">
        <div className="mx-auto max-w-[1140px]">
          <p className="pt-8 pb-5 text-center leading-5 text-[#a94442]">Please select your location on the map</p>

          <section className="relative h-[500px] overflow-hidden">
            <MapChart />

            <div className="absolute top-2.5 left-2.5 flex h-[30px] rounded-xs bg-white font-[Roboto,sans-serif] text-[11px] shadow">
              <button type="button" className="border-r border-[#e5e5e5] pr-1.5 pl-2 font-medium text-black">
                Map
              </button>
              <button type="button" className="px-2 text-[#565656]">
                Satellite
              </button>
            </div>

            <div className="absolute right-2.5 bottom-6 flex w-7 flex-col gap-2.5">
              <button type="button" aria-label="Street View" className="flex h-7 items-center justify-center rounded-xs bg-white shadow">
                <Pegman />
              </button>
              <div className="flex flex-col items-center rounded-xs bg-white shadow">
                <button type="button" aria-label="Zoom in" className="flex h-[27px] w-7 items-center justify-center">
                  <svg viewBox="0 0 10 10" className="size-2.5 fill-[#666]" aria-hidden="true">
                    <path d="M3.7 0H6.3V3.7H10V6.3H6.3V10H3.7V6.3H0V3.7H3.7Z" />
                  </svg>
                </button>
                <div className="h-px w-5 bg-[#e0e0e0]" />
                <button type="button" aria-label="Zoom out" className="flex h-[27px] w-7 items-center justify-center">
                  <svg viewBox="0 0 10 10" className="size-2.5 fill-[#666]" aria-hidden="true">
                    <path d="M0 3.7H10V6.3H0Z" />
                  </svg>
                </button>
              </div>
            </div>

            <a
              href="#google"
              className="absolute bottom-0.5 left-1.5 font-[Lato,sans-serif] text-[20px] leading-6 font-semibold [paint-order:stroke] [-webkit-text-stroke:2px_rgba(255,255,255,0.7)]"
            >
              <span className="text-[#4a7fe0]">G</span>
              <span className="text-[#dc4a3d]">o</span>
              <span className="text-[#f2b524]">o</span>
              <span className="text-[#4a7fe0]">g</span>
              <span className="text-[#3a9c57]">l</span>
              <span className="text-[#dc4a3d]">e</span>
            </a>

            <div className="absolute right-0 bottom-0 flex h-3.5 items-center bg-[#f5f5f5]/70 font-[Roboto,sans-serif] text-[10px] leading-3.5 text-[#444]">
              <span className="border-r border-[#c8cdd6] pr-1.5 pl-1">Map data ©2016 Google, INEGI</span>
              <a href="#terms" className="px-1.5">
                Terms of Use
              </a>
            </div>
          </section>

          <h2 className="pt-24 text-center font-[Roboto,sans-serif] text-[30px] leading-10 font-semibold text-[#2f352f]">
            Step 2: <span className="text-[#3c763d]">Select building type</span>
          </h2>

          <div className="flex flex-wrap gap-1.5 pt-[70px] pl-[18px]">
            {buildings.map(({ name, view, art }) => (
              <button
                key={name}
                type="button"
                className="flex size-[132px] flex-col items-center border border-[#c4e2c6] bg-[#dfefe1] pt-[5px] text-[#444]"
              >
                <svg viewBox={view} className="h-20 w-[130px] shrink-0 fill-[#879187]" aria-hidden="true">
                  {art}
                </svg>
                <span className="mt-1 w-[114px] leading-[17px]">{name}</span>
              </button>
            ))}
          </div>
        </div>
      </main>
    </div>
  );
}
